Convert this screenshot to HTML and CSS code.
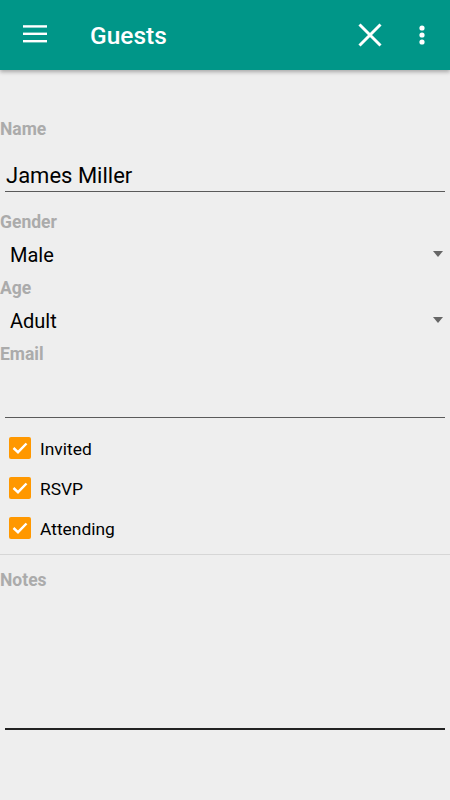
FILE: index.html
```html
<!DOCTYPE html>
<html lang="en">
<head>
    <meta charset="UTF-8">
    <meta name="viewport" content="width=device-width, initial-scale=1.0">
    <title>Guests</title>
    <link rel="stylesheet" href="styles.css">
</head>
<body>
    <div class="appbar">
        <svg class="menu-icon" width="24" height="24" viewBox="0 0 24 24">
            <rect x="0" y="2.2" width="24" height="2.4" fill="#fff"/>
            <rect x="0" y="9.6" width="24" height="2.4" fill="#fff"/>
            <rect x="0" y="17" width="24" height="2.4" fill="#fff"/>
        </svg>
        <div class="title">Guests</div>
        <div class="spacer"></div>
        <svg class="close-icon" width="24" height="24" viewBox="0 0 24 24">
            <path d="M1.5 1.5 L22.5 22.5 M22.5 1.5 L1.5 22.5" stroke="#fff" stroke-width="3"/>
        </svg>
        <svg class="more-icon" width="8" height="24" viewBox="0 0 8 24">
            <circle cx="4" cy="5" r="2.6" fill="#fff"/>
            <circle cx="4" cy="12" r="2.6" fill="#fff"/>
            <circle cx="4" cy="19" r="2.6" fill="#fff"/>
        </svg>
    </div>

    <div class="form">
        <div class="field-label first">Name</div>
        <div class="text-input">James Miller</div>

        <div class="field-label">Gender</div>
        <div class="select">
            <span>Male</span>
            <span class="caret"></span>
        </div>

        <div class="field-label tight">Age</div>
        <div class="select">
            <span>Adult</span>
            <span class="caret"></span>
        </div>

        <div class="field-label tight">Email</div>
        <div class="text-input email"></div>

        <div class="checks">
            <div class="check-row">
                <span class="box">
                    <svg width="22" height="22" viewBox="0 0 22 22"><path d="M4.5 11 L9 15.2 L17.5 6.5" stroke="#fff" stroke-width="2.4" fill="none"/></svg>
                </span>
                <span>Invited</span>
            </div>
            <div class="check-row">
                <span class="box">
                    <svg width="22" height="22" viewBox="0 0 22 22"><path d="M4.5 11 L9 15.2 L17.5 6.5" stroke="#fff" stroke-width="2.4" fill="none"/></svg>
                </span>
                <span>RSVP</span>
            </div>
            <div class="check-row">
                <span class="box">
                    <svg width="22" height="22" viewBox="0 0 22 22"><path d="M4.5 11 L9 15.2 L17.5 6.5" stroke="#fff" stroke-width="2.4" fill="none"/></svg>
                </span>
                <span>Attending</span>
            </div>
        </div>

        <div class="divider"></div>

        <div class="field-label notes-label">Notes</div>
        <div class="notes"></div>
    </div>
</body>
</html>
```

FILE: styles.css
```css
body {
    margin: 0;
    background: #eeeeee;
    font-family: Roboto, "Noto Sans", sans-serif;
    color: #000;
}

.appbar {
    height: 70px;
    background: #009688;
    display: flex;
    align-items: center;
    padding: 0 24px 0 23px;
    box-shadow: 0 2px 4px rgba(0, 0, 0, 0.3);
}
.title {
    color: #fff;
    font-size: 24.5px;
    font-weight: 500;
    line-height: 28px;
    margin-left: 43px;
    padding-top: 2px;
}
.spacer {
    flex: 1;
}
.more-icon {
    margin-left: 36px;
}

.form {
    padding: 0 5px 0 0;
}

.field-label {
    font-size: 17.5px;
    font-weight: bold;
    color: #ababab;
    line-height: 20px;
    margin-top: 20px;
}
.field-label.first {
    margin-top: 49px;
}
.field-label.tight {
    margin-top: 8px;
}

.text-input {
    margin: 21px 0 0 5px;
    height: 30px;
    padding: 0 0 1px 1px;
    border-bottom: 1px solid #5a5a5a;
    font-size: 22px;
    line-height: 31px;
}
.text-input.email {
    margin-top: 22px;
}

.select {
    margin: 8px 0 0 10px;
    height: 30px;
    line-height: 31px;
    font-size: 20px;
    display: flex;
    justify-content: space-between;
    align-items: center;
}
.caret {
    width: 0;
    height: 0;
    border-left: 5.5px solid transparent;
    border-right: 5.5px solid transparent;
    border-top: 6.5px solid #666;
    margin-right: 2px;
    margin-top: -3px;
}

.checks {
    margin-top: 10px;
}
.check-row {
    height: 40px;
    display: flex;
    align-items: center;
    font-size: 17.4px;
    line-height: 22px;
}
.check-row > span:last-child {
    padding-top: 1px;
}
.box {
    width: 22px;
    height: 22px;
    background: #ff9800;
    border-radius: 2px;
    margin: 0 9px 0 9px;
    display: flex;
}

.divider {
    margin-top: 6px;
    margin-right: -5px;
    border-top: 1px solid #d6d6d6;
}

.notes-label {
    margin-top: 15px;
}
.notes {
    margin-left: 5px;
    height: 138px;
    border-bottom: 2px solid #222;
}
```
